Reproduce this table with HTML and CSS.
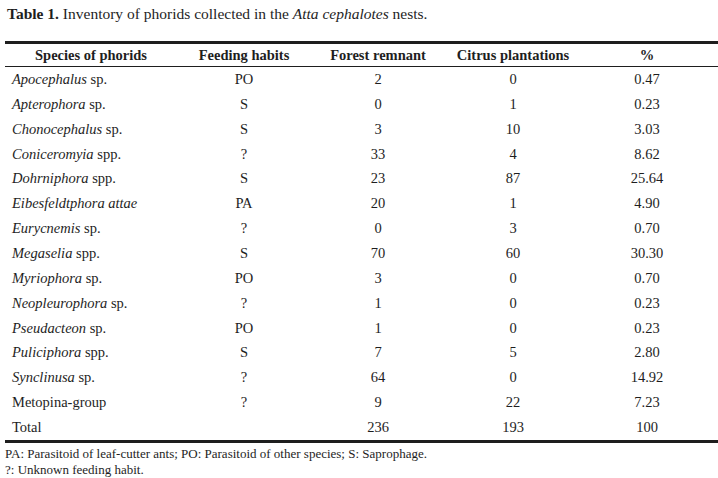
FILE: index.html
```html
<!DOCTYPE html>
<html>
<head>
<meta charset="utf-8">
<link rel="stylesheet" href="styles.css">
</head>
<body>
<div class="page">
  <p class="caption"><b>Table 1.</b> Inventory of phorids collected in the <i>Atta cephalotes</i> nests.</p>
  <table class="data">
    <colgroup>
      <col class="c1"><col class="c2"><col class="c3"><col class="c4"><col class="c5">
    </colgroup>
    <thead>
      <tr><th>Species of phorids</th><th>Feeding habits</th><th>Forest remnant</th><th>Citrus plantations</th><th>%</th></tr>
    </thead>
    <tbody>
      <tr><td class="sp"><i>Apocephalus</i> sp.</td><td>PO</td><td>2</td><td>0</td><td>0.47</td></tr>
      <tr><td class="sp"><i>Apterophora</i> sp.</td><td>S</td><td>0</td><td>1</td><td>0.23</td></tr>
      <tr><td class="sp"><i>Chonocephalus</i> sp.</td><td>S</td><td>3</td><td>10</td><td>3.03</td></tr>
      <tr><td class="sp"><i>Coniceromyia</i> spp.</td><td>?</td><td>33</td><td>4</td><td>8.62</td></tr>
      <tr><td class="sp"><i>Dohrniphora</i> spp.</td><td>S</td><td>23</td><td>87</td><td>25.64</td></tr>
      <tr><td class="sp"><i>Eibesfeldtphora attae</i></td><td>PA</td><td>20</td><td>1</td><td>4.90</td></tr>
      <tr><td class="sp"><i>Eurycnemis</i> sp.</td><td>?</td><td>0</td><td>3</td><td>0.70</td></tr>
      <tr><td class="sp"><i>Megaselia</i> spp.</td><td>S</td><td>70</td><td>60</td><td>30.30</td></tr>
      <tr><td class="sp"><i>Myriophora</i> sp.</td><td>PO</td><td>3</td><td>0</td><td>0.70</td></tr>
      <tr><td class="sp"><i>Neopleurophora</i> sp.</td><td>?</td><td>1</td><td>0</td><td>0.23</td></tr>
      <tr><td class="sp"><i>Pseudacteon</i> sp.</td><td>PO</td><td>1</td><td>0</td><td>0.23</td></tr>
      <tr><td class="sp"><i>Puliciphora</i> spp.</td><td>S</td><td>7</td><td>5</td><td>2.80</td></tr>
      <tr><td class="sp"><i>Synclinusa</i> sp.</td><td>?</td><td>64</td><td>0</td><td>14.92</td></tr>
      <tr><td class="sp">Metopina-group</td><td>?</td><td>9</td><td>22</td><td>7.23</td></tr>
      <tr><td class="sp">Total</td><td></td><td>236</td><td>193</td><td>100</td></tr>
    </tbody>
  </table>
  <div class="notes">
    <p>PA: Parasitoid of leaf-cutter ants; PO: Parasitoid of other species; S: Saprophage.</p>
    <p>?: Unknown feeding habit.</p>
  </div>
</div>
</body>
</html>
```
FILE: styles.css
```css
html, body {
  margin: 0;
  padding: 0;
  background: #ffffff;
}
body {
  font-family: "Liberation Serif", "Times New Roman", serif;
  color: #1e1e1e;
}
.page {
  padding: 5px 0 0 5px;
}
.caption {
  margin: 0 0 0 2px;
  font-size: 15.5px;
  line-height: 18px;
}
.data {
  margin-top: 18px;
  width: 713px;
  border-collapse: collapse;
  table-layout: fixed;
  font-size: 14.5px;
  line-height: 17px;
  border-top: 3px solid #1e1e1e;
  border-bottom: 3px solid #1e1e1e;
}
.c1 { width: 172px; }
.c2 { width: 134px; }
.c3 { width: 134px; }
.c4 { width: 136px; }
.c5 { width: 137px; }
.data th {
  font-weight: bold;
  height: 22px;
  padding: 0;
  text-align: center;
  border-bottom: 1px solid #1e1e1e;
}
.data th:last-child,
.data td:last-child {
  padding-right: 5px;
}
.data td {
  height: 24.86px;
  padding: 0;
  text-align: center;
}
.data td.sp {
  text-align: left;
  padding-left: 7px;
}
.notes {
  margin-top: 3px;
  font-size: 13px;
  line-height: 16px;
}
.notes p {
  margin: 0;
}
```
